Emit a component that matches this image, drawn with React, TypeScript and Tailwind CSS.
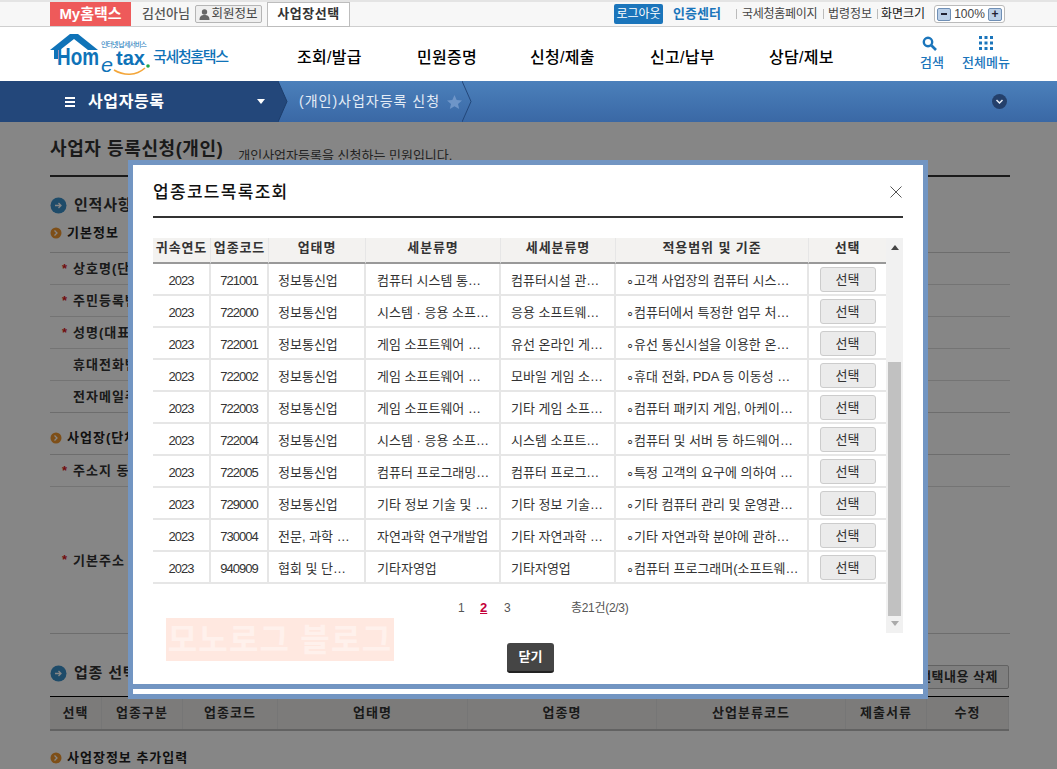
import React from 'react';

const rows = [
  ['721001', '컴퓨터 시스템 통…', '컴퓨터시설 관…', '∘고객 사업장의 컴퓨터 시스…'],
  ['722000', '시스템 · 응용 소프…', '응용 소프트웨…', '∘컴퓨터에서 특정한 업무 처…'],
  ['722001', '게임 소프트웨어 …', '유선 온라인 게…', '∘유선 통신시설을 이용한 온…'],
  ['722002', '게임 소프트웨어 …', '모바일 게임 소…', '∘휴대 전화, PDA 등 이동성 …'],
  ['722003', '게임 소프트웨어 …', '기타 게임 소프…', '∘컴퓨터 패키지 게임, 아케이…'],
  ['722004', '시스템 · 응용 소프…', '시스템 소프트…', '∘컴퓨터 및 서버 등 하드웨어…'],
  ['722005', '컴퓨터 프로그래밍…', '컴퓨터 프로그…', '∘특정 고객의 요구에 의하여 …'],
  ['729000', '기타 정보 기술 및 …', '기타 정보 기술…', '∘기타 컴퓨터 관리 및 운영관…'],
  ['730004', '자연과학 연구개발업', '기타 자연과학 …', '∘기타 자연과학 분야에 관하…', '전문, 과학 …'],
  ['940909', '기타자영업', '기타자영업', '∘컴퓨터 프로그래머(소프트웨…', '협회 및 단…'],
];

const headCols = ['귀속연도', '업종코드', '업태명', '세분류명', '세세분류명', '적용범위 및 기준', '선택'];
const bottomCols = [
  ['선택', 'w-[52px]'],
  ['업종구분', 'w-[81px]'],
  ['업종코드', 'w-[95px]'],
  ['업태명', 'w-[190px]'],
  ['업종명', 'w-[189px]'],
  ['산업분류코드', 'w-[189px]'],
  ['제출서류', 'w-[81px]'],
  ['수정', 'w-[82px]'],
];

const BlueDot = () => (
  <svg width="17" height="17" viewBox="0 0 17 17" className="shrink-0">
    <circle cx="8.5" cy="8.5" r="8" fill="#3a8fc9" />
    <path d="M5 8.5h6M8.5 6l2.5 2.5L8.5 11" stroke="#fff" strokeWidth="1.3" fill="none" />
  </svg>
);

const OrangeDot = () => (
  <svg width="12" height="12" viewBox="0 0 12 12" className="shrink-0">
    <circle cx="6" cy="6" r="5.5" fill="#f0962e" />
    <path d="M4.5 3.5L7 6 4.5 8.5" stroke="#fff" strokeWidth="1.3" fill="none" />
  </svg>
);

const Label = ({ text, star }: { text: string; star?: boolean }) => (
  <div className="h-[32px] flex items-center border-b border-[#dcdcdc]">
    <span className="w-[23px] pl-[12px] text-[#d81a1a] text-[13px] font-bold">{star ? '*' : ''}</span>
    <span className="text-[13px] font-bold text-[#333] tracking-[1px] whitespace-nowrap">{text}</span>
  </div>
);

const Logo = () => (
  <svg width="185" height="48" viewBox="0 0 185 48" className="shrink-0">
    <path d="M1 21L21 5h8l20 16H39L25 10 11 21H9v9H5v-9z" fill="#0f73b8" />
    <text x="8" y="36" fontFamily="Liberation Sans" fontWeight="700" fontSize="24" fill="#0f73b8" textLength="42" lengthAdjust="spacingAndGlyphs">Hom</text>
    <text x="52" y="43" fontFamily="Liberation Sans" fontStyle="italic" fontSize="20" fill="#0f73b8" textLength="12" lengthAdjust="spacingAndGlyphs">e</text>
    <text x="67" y="36" fontFamily="Liberation Sans" fontWeight="700" fontSize="21" fill="#0f73b8" textLength="29" lengthAdjust="spacingAndGlyphs">tax</text>
    <circle cx="99" cy="37" r="1.8" fill="#20a84a" />
    <path d="M65 41c10 6 22 6 31-2" stroke="#f4a63a" strokeWidth="1.6" fill="none" />
    <text x="52" y="18" fontFamily="Noto Sans CJK KR" fontSize="7" fill="#0f73b8" textLength="46" lengthAdjust="spacing">인터넷 납세서비스</text>
    <text x="104" y="33" fontFamily="Noto Sans CJK KR" fontSize="15" fontWeight="500" fill="#0f73b8" textLength="76" lengthAdjust="spacing">국세청홈택스</text>
  </svg>
);

const App: React.FC = () => {
  return (
    <div className="relative w-[1057px] h-[769px] overflow-hidden bg-white text-[#222] text-[13px] font-['Liberation_Sans','Noto_Sans_CJK_KR',sans-serif]">
      {/* top bar */}
      <div className="h-[27px] bg-[#f7f7f7] border-t-2 border-b border-t-[#e4e4e4] border-b-[#cfcfcf] pl-[50px] flex items-center">
        <div className="w-[81px] h-[24px] bg-[#ee5a5a] text-white text-[15px] font-bold flex items-center justify-center whitespace-nowrap">My홈택스</div>
        <span className="ml-[11px] text-[#555] font-medium w-[46px] whitespace-nowrap">김선아님</span>
        <div className="ml-[7px] w-[67px] h-[18px] border border-[#b5b5b5] rounded-[2px] bg-[#efefef] flex items-center justify-center gap-[1px] text-[#444] text-[12.5px] whitespace-nowrap">
          <svg width="11" height="11" viewBox="0 0 11 11"><circle cx="5.5" cy="3" r="2.7" fill="#666" /><path d="M.5 11c0-4 2-5 5-5s5 1 5 5z" fill="#666" /></svg>
          회원정보
        </div>
        <div className="ml-[5px] w-[83px] h-[25px] border border-[#bdbdbd] bg-white flex items-center justify-center font-bold text-[#333] tracking-[0.5px] whitespace-nowrap">사업장선택</div>
        <div className="ml-[264px] w-[49px] h-[20px] bg-[#1b75bb] rounded-[2px] text-white text-[12px] flex items-center justify-center whitespace-nowrap">로그아웃</div>
        <span className="ml-[10px] text-[#1b75bb] font-bold w-[48px] whitespace-nowrap">인증센터</span>
        <span className="ml-[15px] w-px h-[10px] bg-[#bbb]" />
        <span className="ml-[5px] w-[75px] text-[12px] text-[#444] tracking-[-0.3px] whitespace-nowrap">국세청홈페이지</span>
        <span className="ml-[6px] w-px h-[10px] bg-[#bbb]" />
        <span className="ml-[4px] w-[44px] text-[12px] text-[#444] whitespace-nowrap">법령정보</span>
        <span className="ml-[5px] w-px h-[10px] bg-[#bbb]" />
        <span className="ml-[3px] w-[44px] text-[12px] text-[#111] whitespace-nowrap">화면크기</span>
        <div className="ml-[9px] w-[71px] h-[18px] border border-[#bbb] rounded-[3px] bg-white flex items-center justify-between px-[2px]">
          <span className="w-[14px] h-[13px] bg-[#bcd0e8] border border-[#6f8fb5] rounded-[2px] flex items-center justify-center"><span className="w-[6px] h-[1.5px] bg-[#223]" /></span>
          <span className="text-[12px] text-[#444]">100%</span>
          <span className="w-[14px] h-[13px] bg-[#bcd0e8] border border-[#6f8fb5] rounded-[2px] flex items-center justify-center text-[12px] font-bold leading-none text-[#223]">+</span>
        </div>
      </div>

      {/* main nav */}
      <div className="relative h-[54px] pl-[49px] flex items-center">
        <div className="-mt-[2px]"><Logo /></div>
        <nav className="flex mt-[7px] text-[16px] font-medium text-black tracking-[0.3px] whitespace-nowrap">
          <span className="ml-[63px] w-[120px]">조회/발급</span>
          <span className="w-[113px]">민원증명</span>
          <span className="w-[120px]">신청/제출</span>
          <span className="w-[119px]">신고/납부</span>
          <span>상담/제보</span>
        </nav>
        <div className="absolute left-[918px] top-[9px] w-[28px] flex flex-col items-center text-[#1b75bb] text-[13px] font-medium">
          <svg width="16" height="15" viewBox="0 0 16 15" className="-ml-[4px]"><circle cx="6" cy="6" r="4.2" stroke="#1b75bb" strokeWidth="2.4" fill="none" /><path d="M9.5 9.5l4.5 4.5" stroke="#1b75bb" strokeWidth="2.6" /></svg>
          <span className="mt-[2px] whitespace-nowrap">검색</span>
        </div>
        <div className="absolute left-[962px] top-[9px] w-[48px] flex flex-col items-center text-[#1b75bb] text-[13px] font-medium">
          <svg width="14" height="14" viewBox="0 0 14 14" fill="#1b75bb">
            <rect x="0" y="0" width="3" height="3" /><rect x="5.5" y="0" width="3" height="3" /><rect x="11" y="0" width="3" height="3" />
            <rect x="0" y="5.5" width="3" height="3" /><rect x="5.5" y="5.5" width="3" height="3" /><rect x="11" y="5.5" width="3" height="3" />
            <rect x="0" y="11" width="3" height="3" /><rect x="5.5" y="11" width="3" height="3" /><rect x="11" y="11" width="3" height="3" />
          </svg>
          <span className="mt-[3px] whitespace-nowrap">전체메뉴</span>
        </div>
      </div>

      {/* blue location bar */}
      <div className="relative h-[41px] bg-gradient-to-b from-[#4b80bb] to-[#3a68a5] flex items-center text-white">
        <div className="w-[278px] h-full bg-[#23477a] pl-[65px] flex items-center shrink-0">
          <div className="flex flex-col gap-[2px]">
            <span className="w-[10px] h-[2px] bg-white" />
            <span className="w-[10px] h-[2px] bg-white" />
            <span className="w-[10px] h-[2px] bg-white" />
          </div>
          <span className="ml-[13px] w-[77px] text-[16px] font-bold tracking-[0.6px] whitespace-nowrap">사업자등록</span>
          <svg width="8" height="5" viewBox="0 0 8 5" className="ml-[92px]"><path d="M0 0h8L4 5z" fill="#fff" /></svg>
        </div>
        <svg width="10" height="41" viewBox="0 0 10 41" className="shrink-0"><path d="M0 0l9 20.5L0 41z" fill="#23477a" /><path d="M0 0l9 20.5L0 41" stroke="#1d3d6b" fill="none" /></svg>
        <span className="ml-[11px] text-[14px] text-[#e4ecf6] tracking-[1px] whitespace-nowrap w-[142px]">(개인)사업자등록 신청</span>
        <svg width="15" height="14" viewBox="0 0 15 14" className="ml-[6px]"><path d="M7.5 0l2.2 4.9 5.3.5-4 3.5 1.2 5.1-4.7-2.7L2.8 14 4 8.9 0 5.4l5.3-.5z" fill="#6e95c8" /></svg>
        <svg width="10" height="41" viewBox="0 0 10 41" className="shrink-0"><path d="M0 0l9 20.5L0 41" stroke="#23477a" fill="none" /></svg>
        <svg width="15" height="15" viewBox="0 0 15 15" className="absolute left-[992px] top-[13px]"><circle cx="7.5" cy="7.5" r="7.5" fill="#24406b" /><path d="M4.5 6l3 3 3-3" stroke="#e8eef6" strokeWidth="1.5" fill="none" /></svg>
      </div>

      {/* page under the dialog */}
      <div className="w-[960px] ml-[50px]">
        <div className="h-[55px] border-b-2 border-[#333] flex items-end pb-[12px] whitespace-nowrap">
          <span className="text-[18px] font-bold text-[#333] tracking-[0.6px]">사업자 등록신청(개인)</span>
          <span className="ml-[15px] text-[13px] text-[#444] relative top-[2px]">개인사업자등록을 신청하는 민원입니다.</span>
        </div>
        <div className="h-[43px] pt-[13px] flex items-center gap-[7px]"><BlueDot /><span className="text-[15px] font-bold text-[#333] tracking-[0.8px]">인적사항</span></div>
        <div className="h-[32px] pb-[6px] flex items-center gap-[5px]"><OrangeDot /><span className="text-[13px] font-bold text-[#222] tracking-[1px]">기본정보</span></div>
        <div className="border-t border-[#cfcfcf]">
          <Label text="상호명(단체명)" star />
          <Label text="주민등록번호" star />
          <Label text="성명(대표자)" star />
          <Label text="휴대전화번호" />
          <Label text="전자메일주소" />
        </div>
        <div className="h-[42px] pt-[9px] flex items-center gap-[5px] border-t border-[#cfcfcf] -mt-px"><OrangeDot /><span className="text-[13px] font-bold text-[#222] tracking-[1px] whitespace-nowrap">사업장(단체)소재지</span></div>
        <div className="border-t border-[#cfcfcf]">
          <Label text="주소지 동일여부" star />
          <div className="h-[147px] flex items-center border-b border-[#cfcfcf]">
            <span className="w-[23px] pl-[12px] text-[#d81a1a] font-bold">*</span>
            <span className="font-bold text-[#333] tracking-[1px] pt-[2px]">기본주소</span>
          </div>
        </div>
        <div className="h-[62px] flex items-center justify-between pt-[16px]">
          <div className="flex items-center gap-[7px]"><BlueDot /><span className="text-[15px] font-bold text-[#333] tracking-[0.8px]">업종 선택</span></div>
          <div className="h-[24px] mr-px px-[10px] mt-[7px] border border-[#bbb] rounded-[2px] bg-[#f2f2f2] flex items-center font-bold text-[#333] tracking-[0.5px] whitespace-nowrap">선택내용 삭제</div>
        </div>
        <div className="h-[35px] border-t border-t-black border-b-2 border-b-[#bbb] bg-[#ecebe9] flex w-[959px]">
          {bottomCols.map(([label, w]) => (
            <div key={label} className={`${w} flex items-center justify-center font-bold text-[#333] tracking-[1px] border-r border-[#e0e0e0]`}>{label}</div>
          ))}
        </div>
        <div className="h-[52px] pt-[2px] flex items-center gap-[5px]"><OrangeDot /><span className="text-[13px] font-bold text-[#222] tracking-[1px] whitespace-nowrap">사업장정보 추가입력</span></div>
      </div>

      {/* dim layer */}
      <div className="absolute left-0 right-0 top-[122px] bottom-0 bg-black/[0.475]" />

      {/* dialog */}
      <div className="absolute left-[128px] top-[160px] w-[800px] h-[539px] bg-[#7295c2] p-[5px] pb-0">
        <div className="relative h-[519px] bg-white pl-[20px] pr-[20px]">
          <div className="h-[53px] border-b-2 border-[#333] flex items-center text-[17px] font-medium text-[#111]">
            <span className="tracking-[1.3px] mt-[5px]">업종코드목록조회</span>
          </div>
          <svg width="12" height="12" viewBox="0 0 12 12" className="absolute right-[21px] top-[21px]"><path d="M.5.5l11 11M11.5.5l-11 11" stroke="#555" strokeWidth="1" /></svg>

          <div className="flex mt-[20px]">
            <div className="w-[733px]">
              <table className="w-[733px] table-fixed border-separate border-spacing-0">
                <colgroup>
                  <col className="w-[58px]" /><col className="w-[58px]" /><col className="w-[97px]" /><col className="w-[135px]" /><col className="w-[115px]" /><col className="w-[193px]" /><col className="w-[77px]" />
                </colgroup>
                <thead>
                  <tr>
                    {headCols.map((h, i) => (
                      <th key={h} className={`h-[26px] p-0 pb-[4px] bg-[#f3f2f0] border-b-2 border-b-[#999] text-[13px] font-bold text-[#333] tracking-[0.9px] whitespace-nowrap ${i < 6 ? 'border-r border-r-[#e6e6e6]' : ''}`}>{h}</th>
                    ))}
                  </tr>
                </thead>
                <tbody>
                  {rows.map((r) => (
                    <tr key={r[0]} className="text-[13px] text-[#333] whitespace-nowrap">
                      <td className="h-[32px] p-0 pt-[3px] text-center border-b-2 border-r-2 border-[#e6e6e6] tracking-[-1px]">2023</td>
                      <td className="p-0 pt-[3px] text-center border-b-2 border-r-2 border-[#e6e6e6] tracking-[-1px]">{r[0]}</td>
                      <td className="p-0 pt-[3px] pl-[9px] border-b-2 border-r-2 border-[#e6e6e6]">{r[4] || '정보통신업'}</td>
                      <td className="p-0 pt-[3px] pl-[11px] border-b-2 border-r-2 border-[#e6e6e6]">{r[1]}</td>
                      <td className="p-0 pt-[3px] pl-[10px] border-b-2 border-r-2 border-[#e6e6e6]">{r[2]}</td>
                      <td className="p-0 pt-[3px] pl-[10px] border-b-2 border-r-2 border-[#e6e6e6]">{r[3]}</td>
                      <td className="p-0 pt-[1px] border-b-2 border-[#e6e6e6]">
                        <div className="w-[56px] h-[25px] mx-auto border border-[#ccc] rounded-[3px] bg-[#ebebeb] flex items-center justify-center">선택</div>
                      </td>
                    </tr>
                  ))}
                </tbody>
              </table>
              <div className="h-[48px] flex items-center text-[12px] text-[#555] pl-[305px]">
                <span className="w-[22px]">1</span>
                <span className="w-[24px] text-[#c4003a] font-bold underline text-[13px]">2</span>
                <span className="w-[67px]">3</span>
                <span className="whitespace-nowrap tracking-[-0.3px]">총21건(2/3)</span>
              </div>
            </div>
            <div className="relative w-[17px] h-[395px] bg-[#f1f1f1] shrink-0">
              <svg width="8" height="5" viewBox="0 0 8 5" className="absolute left-[5px] top-[7px]"><path d="M0 5h8L4 0z" fill="#444" /></svg>
              <div className="absolute left-[2px] right-[2px] top-[124px] h-[254px] bg-[#c1c1c1]" />
              <svg width="8" height="5" viewBox="0 0 8 5" className="absolute left-[5px] bottom-[7px]"><path d="M0 0h8L4 5z" fill="#aaa" /></svg>
            </div>
          </div>

          <div className="absolute left-[33px] top-[453px] w-[228px] h-[43px] bg-[#ffe8e0] flex items-center justify-center text-[32px] font-bold text-[#fff1ec] tracking-[1.2px] whitespace-nowrap overflow-hidden">모노로그 블로그</div>
          <div className="absolute left-[374px] top-[478px] w-[47px] h-[30px] rounded-[3px] bg-[#454545] border-b-2 border-[#222] text-white font-bold text-[13px] flex items-center justify-center">닫기</div>
        </div>
        <div className="h-[5px] bg-white mt-[5px]" />
      </div>
    </div>
  );
};

export default App;
